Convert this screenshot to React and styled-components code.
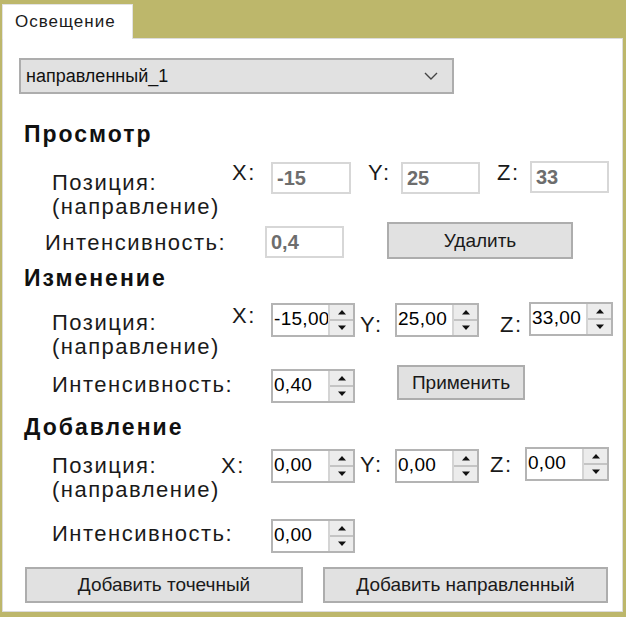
import React from 'react';
import styled, { createGlobalStyle } from 'styled-components';

const GlobalStyle = createGlobalStyle`
  html, body {
    margin: 0;
    padding: 0;
    background: #bdb76b;
  }
  body {
    font-family: "Liberation Sans", Arial, sans-serif;
    color: #111;
  }
`;

const Window = styled.div`
  width: 626px;
  height: 617px;
  background: #bdb76b;
  display: flex;
  flex-direction: column;
`;

const TabStrip = styled.div`
  display: flex;
  padding: 4px 0 0 2px;
  height: 34px;
`;

const Tab = styled.div`
  width: 131px;
  height: 35px;
  background: #fff;
  border: 1px solid #e2e2e2;
  border-bottom: none;
  box-sizing: border-box;
  font-size: 17px;
  letter-spacing: 1px;
  line-height: 34px;
  padding-left: 12px;
  color: #1a1a1a;
  position: relative;
  z-index: 1;
`;

const Panel = styled.div`
  margin: 0 3px 0 2px;
  height: 574px;
  background: #fff;
  border: 1px solid #dcdcdc;
  box-sizing: border-box;
  padding-top: 19px;
`;

const Select = styled.div`
  margin-left: 16px;
  width: 435px;
  height: 36px;
  box-sizing: border-box;
  background: #e1e1e1;
  border: 2px solid #adadad;
  display: flex;
  align-items: center;
  justify-content: space-between;
  padding: 0 14px 0 5px;
  font-size: 18px;
  color: #111;
`;

const SectionTitle = styled.div`
  margin: ${p => p.top}px 0 0 21px;
  font-size: 23px;
  font-weight: 700;
  letter-spacing: 2px;
  line-height: 26px;
  color: #111;
`;

const Row = styled.div`
  display: flex;
  align-items: flex-start;
  height: ${p => p.h}px;
  margin-top: ${p => p.top || 0}px;
`;

const Label = styled.div`
  margin-left: ${p => p.left || 0}px;
  margin-top: ${p => p.dy || 0}px;
  width: ${p => p.w}px;
  flex: none;
  font-size: 22px;
  letter-spacing: 1.5px;
  line-height: 24px;
  color: #1a1a1a;
  white-space: nowrap;
`;

const ViewBox = styled.div`
  width: ${p => p.w || 80}px;
  height: 32px;
  margin-top: ${p => p.dy || 0}px;
  box-sizing: border-box;
  border: 2px solid #d7d7d7;
  flex: none;
  font-size: 20px;
  font-weight: 700;
  color: #6d6d6d;
  line-height: 28px;
  padding-left: 4px;
`;

const SpinWrap = styled.div`
  width: 84px;
  height: 34px;
  margin-top: ${p => p.dy || 0}px;
  box-sizing: border-box;
  border: 2px solid #b4b4b4;
  display: flex;
  flex: none;
  background: #fff;
`;

const SpinValue = styled.div`
  flex: 1;
  overflow: hidden;
  white-space: nowrap;
  font-size: 19px;
  letter-spacing: 0.3px;
  line-height: 24px;
  padding: 2px 0 0 1px;
  color: #000;
`;

const SpinButtons = styled.div`
  width: 23px;
  display: flex;
  flex-direction: column;
  border-left: 2px solid #d4d4d4;
  background: #ececec;
`;

const SpinButton = styled.div`
  flex: 1;
  display: flex;
  align-items: center;
  justify-content: center;
  border-bottom: ${p => (p.top ? '2px solid #c4c4c4' : 'none')};
`;

const Button = styled.div`
  width: ${p => p.w}px;
  height: ${p => p.h || 36}px;
  margin-left: ${p => p.left || 0}px;
  margin-top: ${p => p.dy || 0}px;
  box-sizing: border-box;
  background: #e1e1e1;
  border: 2px solid #adadad;
  display: flex;
  align-items: center;
  justify-content: center;
  font-size: 19px;
  color: #1a1a1a;
  flex: none;
`;

const Arrow = ({ up }) => (
  <svg width="10" height="6" viewBox="0 0 10 6">
    {up ? <path d="M1 5.5 L5 1 L9 5.5 Z" fill="#111" /> : <path d="M1 0.5 L5 5 L9 0.5 Z" fill="#111" />}
  </svg>
);

const Spinner = ({ value, dy }) => (
  <SpinWrap dy={dy}>
    <SpinValue>{value}</SpinValue>
    <SpinButtons>
      <SpinButton top>
        <Arrow up />
      </SpinButton>
      <SpinButton>
        <Arrow />
      </SpinButton>
    </SpinButtons>
  </SpinWrap>
);

const Chevron = () => (
  <svg width="14" height="8" viewBox="0 0 14 8">
    <path d="M1 1 L7 7 L13 1" fill="none" stroke="#444" strokeWidth="1.4" />
  </svg>
);

export default function App() {
  return (
    <Window>
      <GlobalStyle />
      <TabStrip>
        <Tab>Освещение</Tab>
      </TabStrip>
      <Panel>
        <Select>
          <span>направленный_1</span>
          <Chevron />
        </Select>

        <SectionTitle top={27}>Просмотр</SectionTitle>
        <Row h={60} top={15}>
          <Label left={49} w={180} dy={9}>
            Позиция:
            <br />
            (направление)
          </Label>
          <Label w={39} dy={-1}>X:</Label>
          <ViewBox>-15</ViewBox>
          <Label left={17} w={33} dy={-1}>Y:</Label>
          <ViewBox w={79}>25</ViewBox>
          <Label left={17} w={33} dy={-1}>Z:</Label>
          <ViewBox w={79} dy={-1}>33</ViewBox>
        </Row>
        <Row h={43}>
          <Label left={42} w={220} dy={9}>Интенсивность:</Label>
          <ViewBox w={79} dy={4}>0,4</ViewBox>
          <Button left={43} w={186} h={37}>Удалить</Button>
        </Row>

        <SectionTitle top={0}>Изменение</SectionTitle>
        <Row h={62} top={12}>
          <Label left={49} w={180} dy={8}>
            Позиция:
            <br />
            (направление)
          </Label>
          <Label w={39} dy={1}>X:</Label>
          <Spinner value="-15,00" />
          <Label left={5} w={35} dy={10}>Y:</Label>
          <Spinner value="25,00" />
          <Label left={21} w={29} dy={10}>Z:</Label>
          <Spinner value="33,00" dy={-1} />
        </Row>
        <Row h={49}>
          <Label left={49} w={219} dy={8}>Интенсивность:</Label>
          <Spinner value="0,40" dy={4} />
          <Button left={42} w={128} h={35}>Применить</Button>
        </Row>

        <SectionTitle top={0}>Добавление</SectionTitle>
        <Row h={70} top={9}>
          <Label left={49} w={169} dy={5}>
            Позиция:
            <br />
            (направление)
          </Label>
          <Label w={50} dy={5}>X:</Label>
          <Spinner value="0,00" />
          <Label left={5} w={35} dy={4}>Y:</Label>
          <Spinner value="0,00" />
          <Label left={11} w={35} dy={4}>Z:</Label>
          <Spinner value="0,00" dy={-2} />
        </Row>
        <Row h={48}>
          <Label left={49} w={219} dy={3}>Интенсивность:</Label>
          <Spinner value="0,00" />
        </Row>
        <Row h={36}>
          <Button left={22} w={278}>Добавить точечный</Button>
          <Button left={20} w={285}>Добавить направленный</Button>
        </Row>
      </Panel>
    </Window>
  );
}
